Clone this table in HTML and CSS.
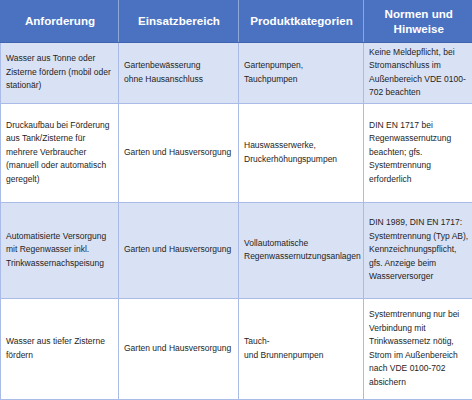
FILE: index.html
```html
<!DOCTYPE html>
<html lang="de">
<head>
<meta charset="utf-8">
<link rel="stylesheet" href="styles.css">
</head>
<body>
<table class="grid">
  <colgroup>
    <col class="c1"><col class="c2"><col class="c3"><col class="c4">
  </colgroup>
  <thead>
    <tr class="head">
      <th>Anforderung</th>
      <th>Einsatzbereich</th>
      <th>Produktkategorien</th>
      <th>Normen und<br>Hinweise</th>
    </tr>
  </thead>
  <tbody>
    <tr class="band r1">
      <td>Wasser aus Tonne oder<br>Zisterne fördern (mobil oder<br>stationär)</td>
      <td>Gartenbewässerung<br>ohne Hausanschluss</td>
      <td>Gartenpumpen,<br>Tauchpumpen</td>
      <td>Keine Meldepflicht, bei<br>Stromanschluss im<br>Außenbereich VDE 0100-<br>702 beachten</td>
    </tr>
    <tr class="plain r2">
      <td>Druckaufbau bei Förderung<br>aus Tank/Zisterne für<br>mehrere Verbraucher<br>(manuell oder automatisch<br>geregelt)</td>
      <td>Garten und Hausversorgung</td>
      <td>Hauswasserwerke,<br>Druckerhöhungspumpen</td>
      <td>DIN EN 1717 bei<br>Regenwassernutzung<br>beachten; gfs.<br>Systemtrennung<br>erforderlich</td>
    </tr>
    <tr class="band r3">
      <td>Automatisierte Versorgung<br>mit Regenwasser inkl.<br>Trinkwassernachspeisung</td>
      <td>Garten und Hausversorgung</td>
      <td>Vollautomatische<br>Regenwassernutzungsanlagen</td>
      <td>DIN 1989, DIN EN 1717:<br>Systemtrennung (Typ AB),<br>Kennzeichnungspflicht,<br>gfs. Anzeige beim<br>Wasserversorger</td>
    </tr>
    <tr class="plain r4">
      <td>Wasser aus tiefer Zisterne<br>fördern</td>
      <td>Garten und Hausversorgung</td>
      <td>Tauch-<br>und Brunnenpumpen</td>
      <td>Systemtrennung nur bei<br>Verbindung mit<br>Trinkwassernetz nötig,<br>Strom im Außenbereich<br>nach VDE 0100-702<br>absichern</td>
    </tr>
  </tbody>
</table>
</body>
</html>
```
FILE: styles.css
```css
html, body {
  margin: 0;
  padding: 0;
  background: #ffffff;
}

.grid {
  border-collapse: collapse;
  table-layout: fixed;
  width: 472px;
  font-family: "Liberation Sans", Arial, sans-serif;
  color: #1e1e1e;
}

.c1 { width: 118px; }
.c2 { width: 120px; }
.c3 { width: 125px; }
.c4 { width: 109px; }

.grid th,
.grid td {
  padding: 0 4px 0 5px;
  vertical-align: middle;
  white-space: nowrap;
}

.head {
  height: 42px;
  background: #4a72c1;
}

.head th {
  color: #ffffff;
  font-size: 11.6px;
  font-weight: bold;
  line-height: 15px;
  text-align: center;
  border-left: 1px solid #8ea6d8;
  border-bottom: 1px solid #3f63ad;
}

.head th:first-child {
  border-left: 1px solid #4a72c1;
}

.grid td {
  font-size: 8.5px;
  line-height: 13.5px;
  text-align: left;
  border: 1px solid #a9bbe6;
}

.band { background: #d9e1f4; }
.plain { background: #ffffff; }

.r1 { height: 61px; }
.r2 { height: 99px; }
.r3 { height: 96px; }
.r4 { height: 101px; }
```
